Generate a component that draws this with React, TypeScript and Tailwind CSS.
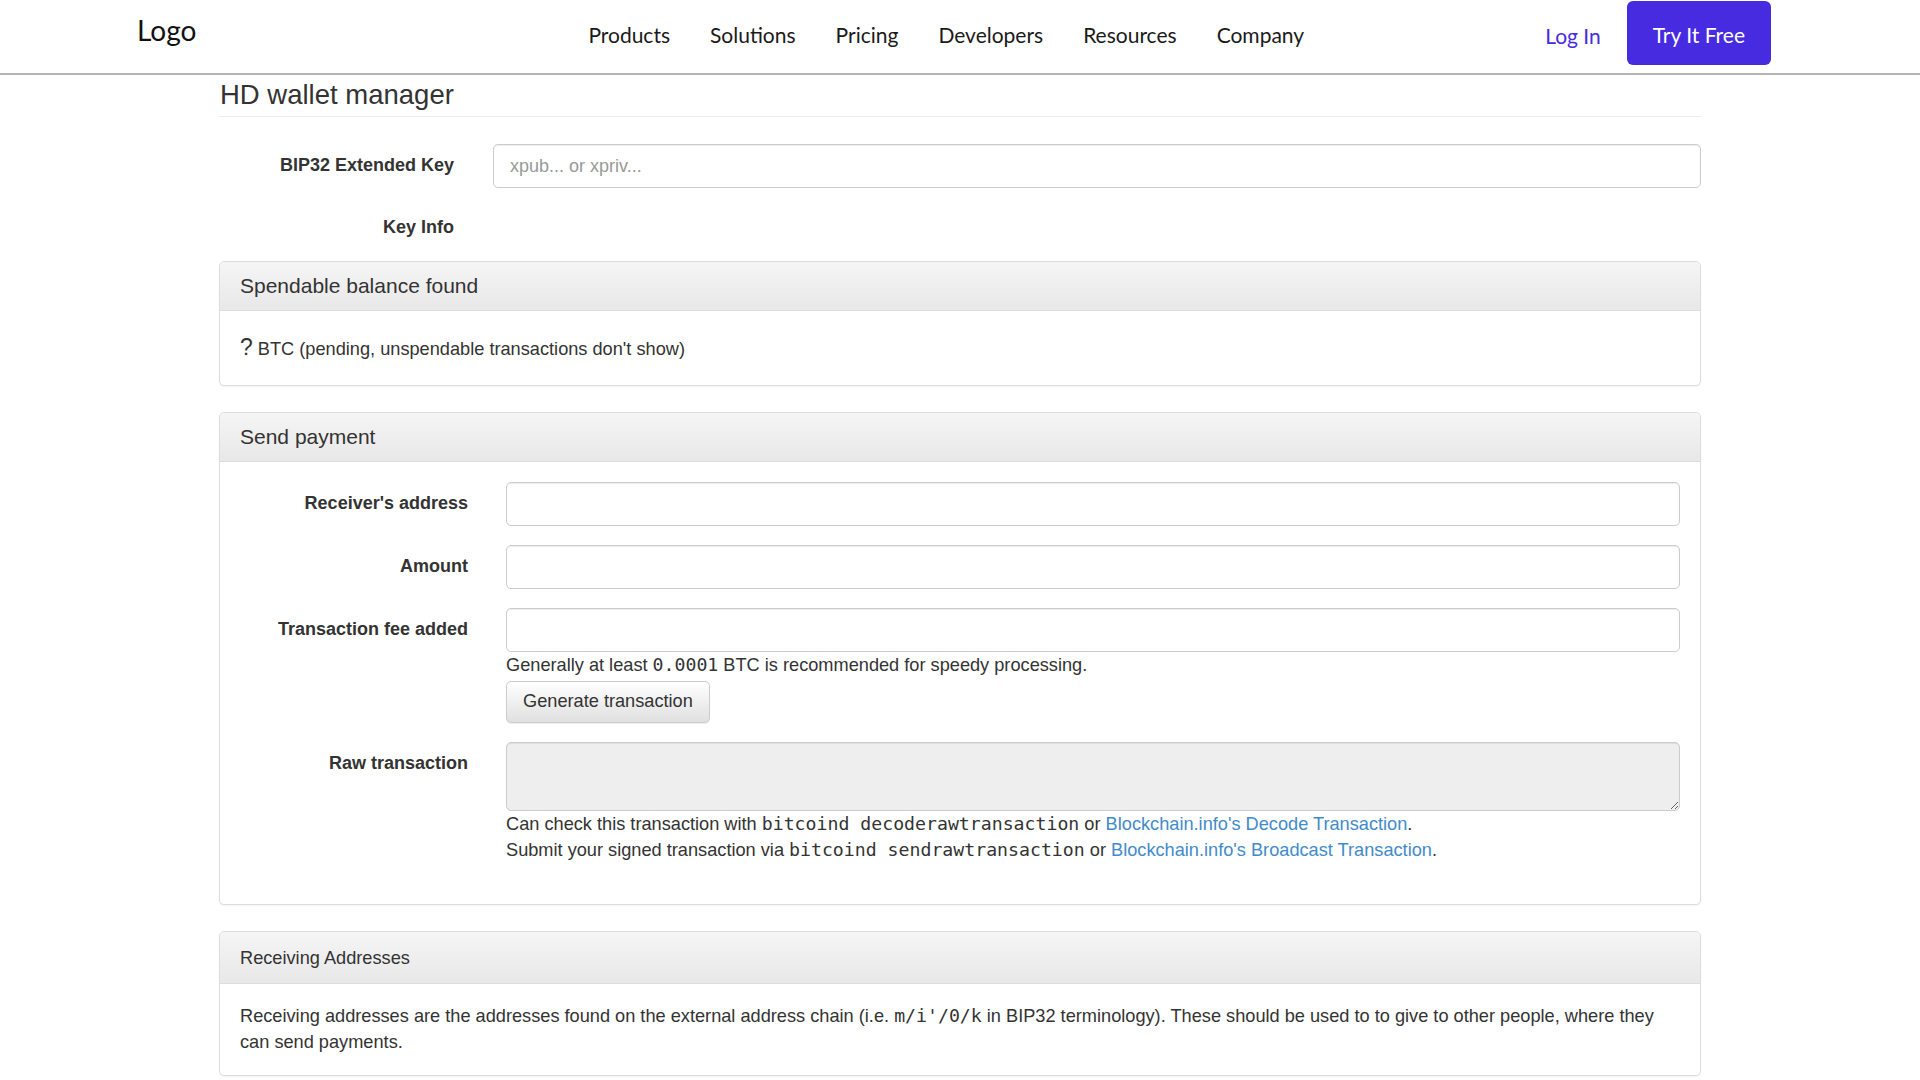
import { ReactNode } from "react";

const navLinks = ["Products", "Solutions", "Pricing", "Developers", "Resources", "Company"];

function Label({ children, width }: { children: ReactNode; width: string }) {
  return (
    <label className={`${width} shrink-0 text-right font-bold text-[18px] leading-[25px] pt-[9px] text-[#333]`}>
      {children}
    </label>
  );
}

function TextInput({ placeholder }: { placeholder?: string }) {
  return (
    <input
      type="text"
      placeholder={placeholder}
      className="w-full h-[44px] px-[16px] border border-[#ccc] rounded-[5px] bg-white text-[18px] text-[#555] placeholder:text-[#999] shadow-[inset_0_1px_1px_rgba(0,0,0,0.075)] outline-none"
    />
  );
}

function Panel({ title, small, children }: { title: string; small?: boolean; children: ReactNode }) {
  return (
    <section className="border border-[#ddd] rounded-[5px] bg-white shadow-[0_1px_2px_rgba(0,0,0,0.05)] overflow-hidden">
      <div
        className={`bg-gradient-to-b from-[#f5f5f5] to-[#e8e8e8] border-b border-[#ddd] px-[20px] text-[#333] ${
          small ? "h-[52px] text-[18.2px] leading-[52px]" : "h-[49px] text-[21px] leading-[47px]"
        }`}
      >
        {title}
      </div>
      {children}
    </section>
  );
}

const mono = "font-['DejaVu_Sans_Mono',monospace] text-[18.2px]";

export default function App() {
  return (
    <div className="min-h-screen bg-white font-['Liberation_Sans',Arial,sans-serif] text-[#333]">
      <header className="h-[75px] border-b-2 border-[#b5b5b5] flex items-center font-['Lato',sans-serif]">
        <div className="ml-[137px] text-[28px] text-[#111] -mt-[14px]">Logo</div>
        <nav className="ml-[392px] -mt-[4px] flex gap-[40px] text-[21px] text-[#1a1a1a]">
          {navLinks.map((l) => (
            <a key={l} href="#">{l}</a>
          ))}
        </nav>
        <a href="#" className="ml-[241px] -mt-[2px] text-[21px] text-[#472be1]">Log In</a>
        <button className="ml-[26px] self-start mt-[1px] h-[64px] px-[26px] pt-[4px] rounded-[6px] bg-[#472be1] text-white text-[21px]">
          Try It Free
        </button>
      </header>

      <main className="w-[1482px] mx-auto">
        <h2 className="pt-[3px] pb-[4px] pl-[1px] text-[27.5px] leading-[34px] text-[#333] border-b border-[#eee]">HD wallet manager</h2>

        <div className="mt-[27px] flex gap-[39px]">
          <Label width="w-[235px]">BIP32 Extended Key</Label>
          <TextInput placeholder="xpub... or xpriv..." />
        </div>
        <div className="mt-[18px] flex gap-[39px] h-[40px]">
          <Label width="w-[235px]">Key Info</Label>
        </div>

        <div className="mt-[15px]">
          <Panel title="Spendable balance found">
            <div className="px-[20px] pt-[21px] pb-[21px] text-[18.2px] leading-[30px]">
              <span className="text-[23px]">?</span> BTC (pending, unspendable transactions don't show)
            </div>
          </Panel>
        </div>

        <div className="mt-[26px]">
          <Panel title="Send payment">
            <div className="px-[20px] pt-[20px] pb-[41px] flex flex-col">
              <div className="flex gap-[38px]">
                <Label width="w-[228px]">Receiver's address</Label>
                <TextInput />
              </div>
              <div className="flex gap-[38px] mt-[19px]">
                <Label width="w-[228px]">Amount</Label>
                <TextInput />
              </div>
              <div className="flex gap-[38px] mt-[19px]">
                <Label width="w-[228px]">Transaction fee added</Label>
                <div className="flex-1 flex flex-col">
                  <TextInput />
                  <p className="text-[18.2px] leading-[25px]">
                    Generally at least <code className={mono}>0.0001</code> BTC is recommended for speedy processing.
                  </p>
                  <div className="mt-[3px]">
                    <button className="h-[42px] px-[16px] border border-[#ccc] rounded-[5px] bg-gradient-to-b from-white to-[#e0e0e0] text-[18.2px] text-[#333] shadow-[0_1px_1px_rgba(0,0,0,0.075)]">
                      Generate transaction
                    </button>
                  </div>
                </div>
              </div>
              <div className="flex gap-[38px] mt-[19px]">
                <Label width="w-[228px]">Raw transaction</Label>
                <div className="flex-1 flex flex-col">
                  <textarea
                    readOnly
                    className="w-full h-[69px] border border-[#ccc] rounded-[5px] bg-[#eee] shadow-[inset_0_1px_1px_rgba(0,0,0,0.075)] outline-none block"
                  />
                  <p className="text-[18.2px] leading-[26px]">
                    Can check this transaction with <code className={mono}>bitcoind decoderawtransaction</code> or{" "}
                    <a href="#" className="text-[#428bca]">Blockchain.info's Decode Transaction</a>.
                  </p>
                  <p className="text-[18.2px] leading-[26px]">
                    Submit your signed transaction via <code className={mono}>bitcoind sendrawtransaction</code> or{" "}
                    <a href="#" className="text-[#428bca]">Blockchain.info's Broadcast Transaction</a>.
                  </p>
                </div>
              </div>
            </div>
          </Panel>
        </div>

        <div className="mt-[26px] pb-[40px]">
          <Panel title="Receiving Addresses" small>
            <div className="pl-[20px] pr-[40px] pt-[19px] pb-[20px] text-[18.2px] leading-[26px]">
              Receiving addresses are the addresses found on the external address chain (i.e.{" "}
              <code className={mono}>m/i'/0/k</code> in BIP32 terminology). These should be used to to give to other people, where they can send payments.
            </div>
          </Panel>
        </div>
      </main>
    </div>
  );
}
